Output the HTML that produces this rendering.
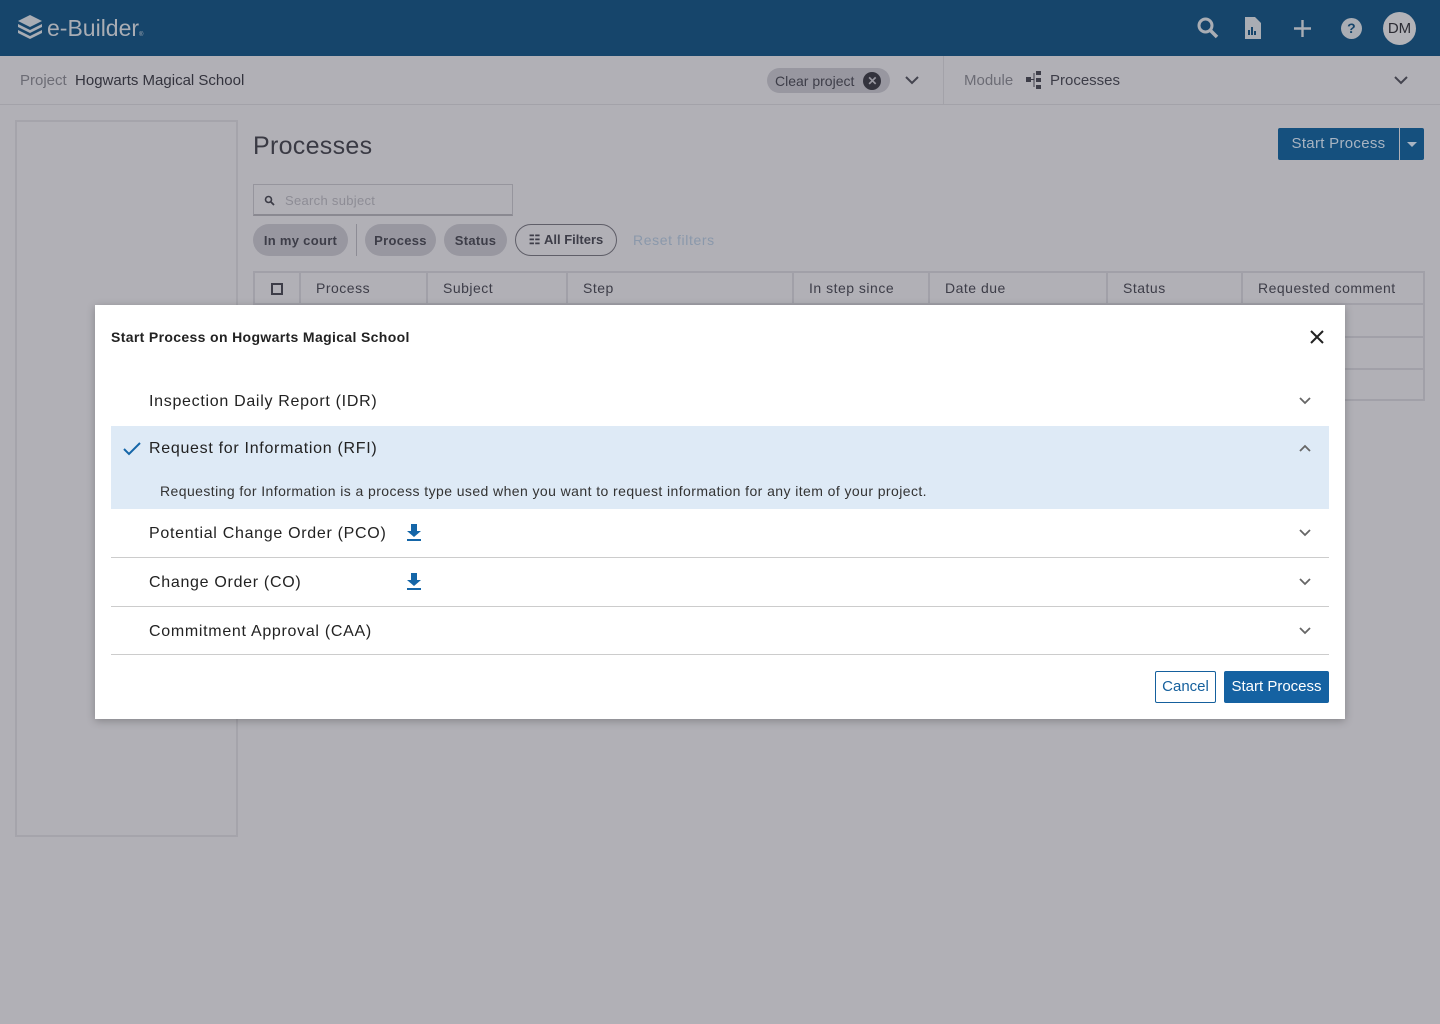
<!DOCTYPE html>
<html><head><meta charset="utf-8"><style>
*{box-sizing:border-box;margin:0;padding:0}
body{width:1440px;height:1024px;background:#b1b0b6;font-family:"Liberation Sans",sans-serif;position:relative;overflow:hidden;color:#3a3a44;letter-spacing:0.3px}
.abs{position:absolute}
.hdr{left:0;top:0;width:1440px;height:56px;background:#16456b}
.sub{left:0;top:56px;width:1440px;height:49px;border-bottom:1px solid #a3a2a9;background:#b1b0b6}
.pill{background:#9897a0;border-radius:16px;font-weight:bold;font-size:13px;color:#3d3d48;display:flex;align-items:center;justify-content:center}
.th{top:272px;height:32px;border-right:2px solid #a1a0a8;font-size:14px;color:#3d3d48;line-height:32px;padding-left:15px;letter-spacing:0.5px}
.modal{left:95px;top:305px;width:1250px;height:414px;background:#fff;box-shadow:0 2px 8px rgba(0,0,0,.25)}
.row{left:16px;width:1218px;font-size:16px;color:#222;}
.row .t{position:absolute;left:38px;letter-spacing:0.7px}
.chev{position:absolute;right:18px}
.dl{position:absolute;left:295px}
</style></head><body>
<div class="abs hdr"></div>
<svg class="abs" style="left:17px;top:14px" width="26" height="28" viewBox="0 0 26 28"><path d="M13 1 L25 7 L13 13 L1 7Z" fill="#a9adb4"/><path d="M1 10 L13 16 L25 10 V13 L13 19 L1 13Z M1 16 L13 22 L25 16 V19 L13 25 L1 19Z" fill="#a9adb4"/></svg>
<div class="abs" style="left:47px;top:15px;font-size:23px;color:#a9adb4;letter-spacing:0">e-Builder<span style="font-size:6px">®</span></div>
<svg class="abs" style="left:1197px;top:17px" width="22" height="22" viewBox="0 0 22 22"><circle cx="8.5" cy="8.5" r="6.5" stroke="#a9adb4" stroke-width="3" fill="none"/><path d="M13 13 L20 20" stroke="#a9adb4" stroke-width="3.5"/></svg>
<svg class="abs" style="left:1245px;top:17px" width="16" height="22" viewBox="0 0 16 22"><path d="M0 0H10L16 6V22H0Z" fill="#a9adb4"/><path d="M4 18V13M7 18V10M10 18V14" stroke="#16456b" stroke-width="2"/></svg>
<svg class="abs" style="left:1293px;top:19px" width="19" height="19"><path d="M9.5 1V18M1 9.5H18" stroke="#a9adb4" stroke-width="2.4"/></svg>
<div class="abs" style="left:1341px;top:18px;width:21px;height:21px;border-radius:50%;background:#a9adb4;color:#16456b;font-weight:bold;font-size:14px;text-align:center;line-height:21px">?</div>
<div class="abs" style="left:1383px;top:12px;width:33px;height:33px;border-radius:50%;background:#b3b3b8;color:#2c2c34;font-size:15px;text-align:center;line-height:33px;letter-spacing:0">DM</div>
<div class="abs sub"></div>
<div class="abs" style="left:20px;top:72px;font-size:15px;letter-spacing:0"><span style="color:#6c6c75">Project</span>&nbsp; <span style="color:#33333d">Hogwarts Magical School</span></div>
<div class="abs pill" style="left:767px;top:68px;width:123px;height:25px;font-weight:normal;font-size:14px;justify-content:flex-start;padding-left:8px;letter-spacing:0">Clear project<span style="display:inline-block;width:18px;height:18px;border-radius:50%;background:#33333d;color:#9897a0;font-size:12px;text-align:center;line-height:18px;margin-left:9px;font-weight:bold">✕</span></div>
<svg class="abs" style="left:905px;top:75px" width="14" height="10"><path d="M1 2L7 8L13 2" stroke="#44444f" stroke-width="2" fill="none"/></svg>
<div class="abs" style="left:943px;top:56px;width:1px;height:48px;background:#a3a2a9"></div>
<div class="abs" style="left:964px;top:72px;font-size:15px;color:#6c6c75;letter-spacing:0">Module</div>
<svg class="abs" style="left:1025px;top:70px" width="18" height="20"><rect x="1" y="7" width="5" height="5" fill="#3d3d48"/><rect x="11" y="1" width="5" height="4" fill="#3d3d48"/><rect x="11" y="8" width="5" height="4" fill="#3d3d48"/><rect x="11" y="15" width="5" height="4" fill="#3d3d48"/><path d="M9 3V17M6 9.5H9" stroke="#3d3d48"/></svg>
<div class="abs" style="left:1050px;top:72px;font-size:15px;color:#3d3d48;letter-spacing:0">Processes</div>
<svg class="abs" style="left:1394px;top:75px" width="14" height="10"><path d="M1 2L7 8L13 2" stroke="#44444f" stroke-width="2" fill="none"/></svg>
<div class="abs" style="left:15px;top:120px;width:223px;height:717px;border:2px solid #a5a4ab;background:#b1b0b6"></div>
<div class="abs" style="left:253px;top:132px;font-size:25px;color:#3a3a44">Processes</div>
<div class="abs" style="left:1278px;top:128px;width:121px;height:32px;background:#15507e;color:#a8b4c2;font-size:15px;line-height:32px;text-align:center;border-radius:2px 0 0 2px">Start Process</div>
<div class="abs" style="left:1400px;top:128px;width:24px;height:32px;background:#15507e;border-radius:0 2px 2px 0"><svg width="24" height="32"><path d="M7 14H17L12 19Z" fill="#a8b4c2"/></svg></div>
<div class="abs" style="left:253px;top:184px;width:260px;height:32px;border:1px solid #96959d;border-bottom:2px solid #8a8991"></div>
<svg class="abs" style="left:264px;top:195px" width="11" height="11"><circle cx="4.5" cy="4.5" r="3" stroke="#3d3d48" stroke-width="1.6" fill="none"/><path d="M7 7L10 10" stroke="#3d3d48" stroke-width="1.8"/></svg>
<div class="abs" style="left:285px;top:193px;font-size:13px;color:#8d8c95">Search subject</div>
<div class="abs pill" style="left:253px;top:224px;width:95px;height:32px">In my court</div>
<div class="abs" style="left:356px;top:224px;width:1px;height:32px;background:#8d8c95"></div>
<div class="abs pill" style="left:365px;top:224px;width:71px;height:32px">Process</div>
<div class="abs pill" style="left:444px;top:224px;width:63px;height:32px">Status</div>
<div class="abs pill" style="left:515px;top:224px;width:102px;height:32px;background:none;border:1px solid #5f5e68;letter-spacing:0">☷&nbsp;All Filters</div>
<div class="abs" style="left:633px;top:232px;font-size:14px;color:#8a98ab;letter-spacing:0.6px">Reset filters</div>
<div class="abs" style="left:253px;top:271px;width:1172px;height:130px;border:2px solid #a1a0a8;background:#b1b0b6"></div>
<div class="abs" style="left:253px;top:303px;width:1172px;height:2px;background:#a1a0a8"></div>
<div class="abs" style="left:1345px;top:336px;width:80px;height:2px;background:#a1a0a8"></div>
<div class="abs" style="left:1345px;top:368px;width:80px;height:2px;background:#a1a0a8"></div>
<div class="abs th" style="left:253px;width:48px"><span style="display:inline-block;width:12px;height:12px;border:2px solid #3d3d48;margin-left:3px;vertical-align:middle"></span></div>
<div class="abs th" style="left:301px;width:127px">Process</div>
<div class="abs th" style="left:428px;width:140px">Subject</div>
<div class="abs th" style="left:568px;width:226px">Step</div>
<div class="abs th" style="left:794px;width:136px">In step since</div>
<div class="abs th" style="left:930px;width:178px">Date due</div>
<div class="abs th" style="left:1108px;width:135px">Status</div>
<div class="abs th" style="left:1243px;width:180px;border:none">Requested comment</div>

<div class="abs modal">
<div class="abs" style="left:16px;top:24px;font-size:14px;font-weight:bold;color:#222;letter-spacing:0.35px">Start Process on Hogwarts Magical School</div>
<svg class="abs" style="left:1214px;top:24px" width="16" height="16"><path d="M2 2L14 14M14 2L2 14" stroke="#222" stroke-width="2"/></svg>
<div class="abs row" style="top:73px;height:48px"><span class="t" style="top:15px">Inspection Daily Report (IDR)</span><svg class="chev" style="top:19px" width="12" height="8"><path d="M1 1L6 6L11 1" stroke="#666" stroke-width="1.8" fill="none"/></svg></div>
<div class="abs row" style="top:121px;height:83px;background:#deeaf6"><svg class="abs" style="left:12px;top:16px" width="18" height="14"><path d="M1 7L6 12L17 1" stroke="#1566a8" stroke-width="2" fill="none"/></svg><span class="t" style="top:14px">Request for Information (RFI)</span><svg class="chev" style="top:18px" width="12" height="8"><path d="M1 7L6 2L11 7" stroke="#666" stroke-width="1.8" fill="none"/></svg><span class="abs" style="left:49px;top:57px;font-size:14px;color:#333;letter-spacing:0.42px">Requesting for Information is a process type used when you want to request information for any item of your project.</span></div>
<div class="abs row" style="top:204px;height:49px;border-bottom:1px solid #ccc"><span class="t" style="top:16px">Potential Change Order (PCO)</span><svg class="dl" style="top:15px" width="16" height="18"><path d="M5 0H11V7H15L8 13L1 7H5Z" fill="#1566a8"/><rect x="1" y="15" width="14" height="2" fill="#1566a8"/></svg><svg class="chev" style="top:20px" width="12" height="8"><path d="M1 1L6 6L11 1" stroke="#666" stroke-width="1.8" fill="none"/></svg></div>
<div class="abs row" style="top:253px;height:49px;border-bottom:1px solid #ccc"><span class="t" style="top:16px">Change Order (CO)</span><svg class="dl" style="top:15px" width="16" height="18"><path d="M5 0H11V7H15L8 13L1 7H5Z" fill="#1566a8"/><rect x="1" y="15" width="14" height="2" fill="#1566a8"/></svg><svg class="chev" style="top:20px" width="12" height="8"><path d="M1 1L6 6L11 1" stroke="#666" stroke-width="1.8" fill="none"/></svg></div>
<div class="abs row" style="top:302px;height:48px;border-bottom:1px solid #ccc"><span class="t" style="top:16px">Commitment Approval (CAA)</span><svg class="chev" style="top:20px" width="12" height="8"><path d="M1 1L6 6L11 1" stroke="#666" stroke-width="1.8" fill="none"/></svg></div>
<div class="abs" style="left:1060px;top:366px;width:61px;height:32px;border:1px solid #15609d;border-radius:2px;color:#15609d;font-size:15px;text-align:center;line-height:30px;letter-spacing:0">Cancel</div>
<div class="abs" style="left:1129px;top:366px;width:105px;height:32px;background:#1562a2;border-radius:2px;color:#fff;font-size:15px;text-align:center;line-height:32px;letter-spacing:0">Start Process</div>
</div>
</body></html>
